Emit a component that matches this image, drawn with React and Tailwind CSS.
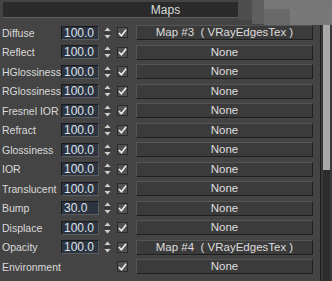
import React from "react";

const rows = [
  { label: "Diffuse", value: "100.0", map: "Map #3  ( VRayEdgesTex )" },
  { label: "Reflect", value: "100.0", map: "None" },
  { label: "HGlossiness", value: "100.0", map: "None" },
  { label: "RGlossiness", value: "100.0", map: "None" },
  { label: "Fresnel IOR", value: "100.0", map: "None" },
  { label: "Refract", value: "100.0", map: "None" },
  { label: "Glossiness", value: "100.0", map: "None" },
  { label: "IOR", value: "100.0", map: "None" },
  { label: "Translucent", value: "100.0", map: "None" },
  { label: "Bump", value: "30.0", map: "None" },
  { label: "Displace", value: "100.0", map: "None" },
  { label: "Opacity", value: "100.0", map: "Map #4  ( VRayEdgesTex )" },
  { label: "Environment", value: null, map: "None" },
];

function Spinner() {
  return (
    <svg width="9" height="14" viewBox="0 0 9 14" className="block">
      <polygon points="4.5,1.5 1.5,5 7.5,5" fill="#cfcfcf" />
      <line x1="1" y1="7" x2="8" y2="7" stroke="#2a2a2a" strokeWidth="1" />
      <polygon points="1.5,9 7.5,9 4.5,12.5" fill="#cfcfcf" />
    </svg>
  );
}

function Check() {
  return (
    <div className="w-[11px] h-[11px] bg-[#525252] border border-[#2c2c2c] flex items-center justify-center">
      <svg width="10" height="10" viewBox="0 0 10 10" className="block">
        <polyline points="1,5 3.8,8 9,1.5" fill="none" stroke="#ececec" strokeWidth="1.8" />
      </svg>
    </div>
  );
}

function Row({ label, value, map }) {
  return (
    <div className="flex items-center h-[19.5px]">
      <div className="w-[59px] pl-[2px] text-[10.5px] text-[#dadada] whitespace-nowrap leading-none">
        {label}
      </div>
      {value !== null ? (
        <>
          <div className="ml-[2px] w-[38px] h-[14px] bg-[#2d3441] border-t border-l border-t-[#1a1a1a] border-l-[#1a1a1a] border-b border-r border-b-[#5c5c5c] border-r-[#5c5c5c] flex items-center pl-[2px] text-[12px] leading-none text-[#dde2ea]">
            {value}
          </div>
          <div className="ml-[4px] w-[9px]">
            <Spinner />
          </div>
        </>
      ) : (
        <div className="ml-[2px] w-[51px]" />
      )}
      <div className="ml-[5px]">
        <Check />
      </div>
      <div className="ml-[8px] w-[177px] h-[15px] bg-[#3b3b3b] border border-t-[#555555] border-l-[#555555] border-b-[#1f1f1f] border-r-[#1f1f1f] flex items-center justify-center text-[11.5px] leading-none text-[#dedede] whitespace-pre">
        {map}
      </div>
    </div>
  );
}

export default function App() {
  return (
    <div
      className="relative w-[332px] h-[281px] bg-[#444444] overflow-hidden flex"
      style={{ fontFamily: '"Liberation Sans", Arial, sans-serif' }}
    >
      <div className="w-[320px] flex flex-col">
        <div className="mt-[2px] ml-[3px] h-[16px] bg-[#2b2b2b] border-b border-b-[#5e5e5e] flex items-center justify-center text-[12px] text-[#dcdcdc] leading-none">
          <span className="ml-[8px]">Maps</span>
        </div>
        <div className="mt-[5px] flex flex-col">
          {rows.map((r) => (
            <Row key={r.label} {...r} />
          ))}
        </div>
      </div>
      <div className="w-[12px] flex">
        <div className="w-[1px] bg-[#1e1e1e]" />
        <div className="w-[2px] bg-[#383838]" />
        <div className="w-[7px] flex flex-col pt-[25px]">
          <div className="h-[145px] bg-[#a8a8a8]" />
          <div className="flex-1 bg-[#2c2c2c]" />
        </div>
        <div className="w-[2px] bg-[#3a3a3a]" />
      </div>

      {/* blurred overlay in top-right corner */}
      <div className="absolute left-[238px] top-0 w-[14px] h-[20px] bg-[#4e4e4e]" />
      <div className="absolute left-[252px] top-0 w-[12px] h-[24px] bg-[#5e5e5e]" />
      <div className="absolute left-[264px] top-0 w-[68px] h-[9px] bg-[#777777]" />
      <div className="absolute left-[264px] top-[9px] w-[26px] h-[16px] bg-[#6a6a6a]" />
      <div className="absolute left-[290px] top-[9px] w-[42px] h-[16px] bg-[#787878]" />
    </div>
  );
}
